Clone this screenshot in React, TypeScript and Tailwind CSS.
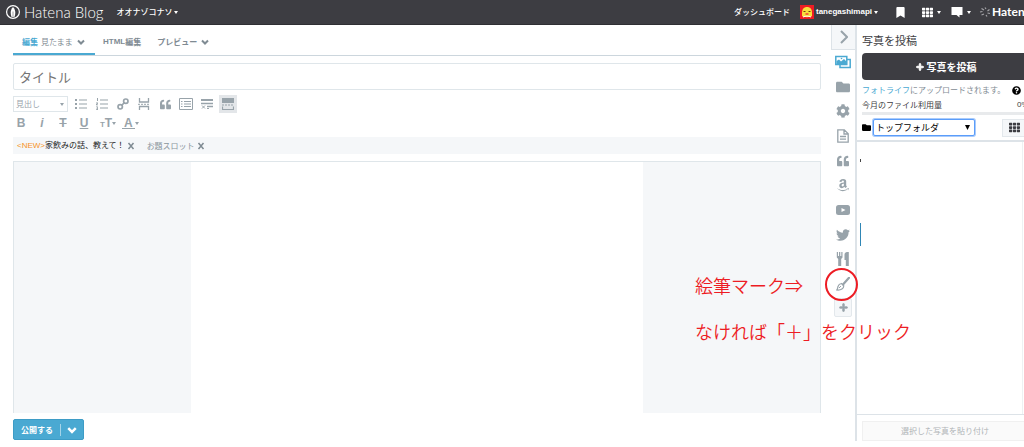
import type { ReactNode } from "react";
import {
  FaAmazon,
  FaBookmark,
  FaCog,
  FaFolder,
  FaPlus,
  FaQuestionCircle,
  FaQuoteLeft,
  FaTh,
  FaTwitter,
} from "react-icons/fa";

const HatenaMark = () => (
  <svg viewBox="0 0 16 16" className="size-4" fill="none">
    <circle cx="8" cy="8" r="6.4" stroke="#fff" strokeWidth="1.2" />
    <path d="M8 3c1.600 1.800 2.300 3.500 2.300 5.700 0 1.500-.3 3-.9 4.300H6.600c-.6-1.300-.9-2.800-.9-4.300C5.700 6.500 6.400 4.800 8 3z" fill="#fff" />
    <path d="M8 7.500V13" stroke="#3d3d42" strokeWidth=".5" />
  </svg>
);

const Avatar = () => (
  <svg viewBox="0 0 14 14" className="size-[14px]">
    <rect width="14" height="14" fill="#ee1c24" />
    <path d="M2 8c0-4 2-6 5-6 3.200 0 5 2 5 6v3c-2 1.500-8 1.500-10 0z" fill="#f7e03c" />
    <path d="M3.500 6.500h2M8.500 6.500h2" stroke="#6b3a12" strokeWidth="1" />
    <path d="M5.500 9h3" stroke="#e33" strokeWidth="1.400" />
    <path d="M3 12c2-1 6-1 8 0" stroke="#fff" strokeWidth="1.200" fill="none" />
  </svg>
);

const BubbleIcon = () => (
  <svg viewBox="0 0 12 12" className="size-3" fill="#fff">
    <path d="M.5 1h11v8H8.500v2.500L5.500 9h-5z" />
  </svg>
);

const SparkIcon = () => (
  <svg viewBox="0 0 12 12" className="size-3 shrink-0" fill="none" stroke="#a5a5a9" strokeWidth="1.200">
    <path d="M1 6l2.500-.5M2.500 2.500L5 4M6 1.500l1 1.500M10.500 3.500L8.500 5M11 7.500L8.500 7M8 10.500L7 9M2.500 9L5 8" />
  </svg>
);

const BulletListIcon = () => (
  <svg viewBox="0 0 12 12" className="size-3" fill="currentColor">
    <path d="M0 1h2v2H0zM0 5h2v2H0zM0 9h2v2H0zM4 1.500h8v1H4zM4 5.500h8v1H4zM4 9.500h8v1H4z" />
  </svg>
);

const NumberListIcon = () => (
  <svg viewBox="0 0 12 12" className="size-3" fill="currentColor">
    <path d="M1 0h1v3H1zM0 4.500h2v1L1 6.500h1v.7H0v-1l1-1H0zM0 8.500h2V12H0v-.7h1.200v-.7H.3v-.7h.9v-.7H0zM4 1.500h8v1H4zM4 5.500h8v1H4zM4 9.500h8v1H4z" />
  </svg>
);

const LinkIcon = () => (
  <svg viewBox="0 0 12 12" className="size-3" fill="none" stroke="currentColor" strokeWidth="1.700">
    <circle cx="8.800" cy="3.200" r="2.200" />
    <circle cx="3.200" cy="8.800" r="2.200" />
    <path d="M4.500 7.500l3-3" />
  </svg>
);

const BreakIcon = () => (
  <svg viewBox="0 0 12 12" className="size-3" fill="none" stroke="currentColor">
    <path d="M1.500 0v4h9V0M1.500 12V8.500h9V12" strokeWidth="1.300" />
    <path d="M0 6.300h12" strokeDasharray="2 1" />
  </svg>
);

const TocIcon = () => (
  <svg viewBox="0 0 14 12" className="h-3 w-[14px]" fill="none" stroke="currentColor">
    <path d="M.5.5h13v11H.5zM2 3.500h1.500M5 3.500h7M2 6h1.500M5 6h7M2 8.500h1.500M5 8.500h7" />
  </svg>
);

const FootnoteIcon = () => (
  <svg viewBox="0 0 12 12" className="size-3" fill="none" stroke="currentColor">
    <path d="M0 2h12" strokeWidth="2" />
    <path d="M0 5.500h12M6 8.500h6" strokeWidth="1.300" />
    <path d="M1 7.500l3 3M4 7.500l-3 3M6 10.500h2" />
  </svg>
);

const MoreIcon = () => (
  <svg viewBox="0 0 12 12" className="size-3" fill="none" stroke="currentColor">
    <path d="M0 0h12v5H0z" fill="currentColor" stroke="none" />
    <path d="M0 7h12" strokeDasharray="2 1" />
    <path d="M.5 8.500v3h11v-3" strokeWidth="1.200" />
  </svg>
);

const PhotosIcon = () => (
  <svg viewBox="0 0 16 14" className="h-[14px] w-4">
    <path d="M5 4.500h10.200v8H5z" fill="#fff" stroke="#4aa9d2" strokeWidth="1.500" />
    <path d="M.8 1.500h11v8H.8z" fill="#fff" stroke="#4aa9d2" strokeWidth="1.500" />
    <path d="M1.500 9V6l2.500-1.500L6 6.500 9 4l2.500 2.500V9z" fill="#4aa9d2" />
    <circle cx="6.500" cy="3.500" r=".8" fill="#4aa9d2" />
  </svg>
);

const PageIcon = () => (
  <svg viewBox="0 0 12 14" className="h-[14px] w-3" fill="none" stroke="currentColor" strokeWidth="1.300">
    <path d="M.8.8h6.500l3.900 3.900v8.500H.8zM7 1v4h4" />
    <path d="M3 7.500h6M3 10.200h6" />
  </svg>
);

const VideoIcon = () => (
  <svg viewBox="0 0 14 10" className="h-[10px] w-[14px]">
    <rect width="14" height="10" rx="2.500" fill="currentColor" />
    <path d="M5.500 3l4 2-4 2z" fill="#fff" />
  </svg>
);

const FoodIcon = () => (
  <svg viewBox="0 0 14 14" className="size-[14px]" fill="currentColor">
    <path d="M.8 0H2v4h1V0h1.300v4h1V0h1.200v5.500L5.200 7v7H2.200V7L.8 5.500zM8.500 2.500C8.500 1 9.800 0 11 0h1.800v14H9.800V8H8.500z" />
  </svg>
);

const BrushIcon = () => (
  <svg viewBox="0 0 14 14" className="size-[14px]" fill="none" stroke="currentColor">
    <path d="M13 .8L7 7.500" strokeWidth="2.200" strokeLinecap="round" />
    <path d="M5.500 6.500l2.200 2C8 11.500 5 13.500.8 13c1-1 .7-2 1.200-3.500.6-1.800 2-2.800 3.500-3z" strokeWidth="1.200" />
    <path d="M3 11l2-2" />
  </svg>
);

const Caret = ({ className = "" }: { className?: string }) => (
  <svg viewBox="0 0 4 3" className={`w-1 ${className}`} fill="currentColor">
    <path d="M0 0h4L2 3z" />
  </svg>
);

const ChevronDown = ({ className = "" }: { className?: string }) => (
  <svg viewBox="0 0 8 8" className={className} fill="none" stroke="currentColor" strokeWidth="2">
    <path d="M1 2.500l3 3 3-3" />
  </svg>
);

const CloseIcon = () => (
  <svg viewBox="0 0 8 8" className="size-2" fill="none" stroke="currentColor" strokeWidth="1.500">
    <path d="M1.500 1l5 6M6.500 1l-5 6" />
  </svg>
);

const tools: { label: string; icon: ReactNode; active?: boolean }[] = [
  { label: "箇条書き", icon: <BulletListIcon /> },
  { label: "番号付きリスト", icon: <NumberListIcon /> },
  { label: "リンク", icon: <LinkIcon /> },
  { label: "続きを読む", icon: <BreakIcon /> },
  { label: "引用", icon: <FaQuoteLeft className="size-[11px]" /> },
  { label: "目次", icon: <TocIcon /> },
  { label: "脚注", icon: <FootnoteIcon /> },
  { label: "ツールバー", icon: <MoreIcon />, active: true },
];

const railItems: { label: string; icon: ReactNode }[] = [
  { label: "写真", icon: <PhotosIcon /> },
  { label: "カテゴリー", icon: <FaFolder className="size-[14px]" /> },
  { label: "設定", icon: <FaCog className="size-[14px]" /> },
  { label: "下書き", icon: <PageIcon /> },
  { label: "引用", icon: <FaQuoteLeft className="size-3" /> },
  { label: "Amazon", icon: <FaAmazon className="size-[14px]" /> },
  { label: "YouTube", icon: <VideoIcon /> },
  { label: "Twitter", icon: <FaTwitter className="size-[14px]" /> },
  { label: "グルメ", icon: <FoodIcon /> },
  { label: "お絵かき", icon: <BrushIcon /> },
];

function Header() {
  return (
    <header className="flex h-[25px] items-center overflow-hidden whitespace-nowrap border-b border-[#2f2f33] bg-[#3d3d42] text-[8px] text-white">
      <a href="#" className="ml-[5px] flex items-center gap-[3px] font-['Lato'] text-[15px] font-light leading-none">
        <HatenaMark />
        Hatena Blog
      </a>
      <button className="ml-[13px] flex items-center gap-0.5 font-medium">
        オオナゾコナソ
        <Caret />
      </button>
      <nav className="ml-auto flex items-center">
        <a href="#" className="mr-2.5 font-medium">ダッシュボード</a>
        <button className="mr-[17px] flex items-center gap-0.5 font-['Liberation_Sans'] text-[8px] font-bold">
          <Avatar />
          tanegashimapi
          <Caret />
        </button>
        <button aria-label="ブックマーク" className="mr-4"><FaBookmark className="size-[11px]" /></button>
        <button aria-label="サービス" className="mr-2.5 flex items-center gap-1">
          <FaTh className="size-[11px]" />
          <Caret />
        </button>
        <button aria-label="お知らせ" className="mr-2 flex items-center gap-1">
          <BubbleIcon />
          <Caret />
        </button>
        <a href="#" className="flex w-[45px] items-center gap-px font-['Lato'] text-[12px] font-bold">
          <SparkIcon />
          Haten
        </a>
      </nav>
    </header>
  );
}

function Toolbar() {
  return (
    <div className="mt-1.5 text-[#98a3aa]">
      <div className="flex items-center">
        <div className="relative mr-[5px]">
          <select
            aria-label="見出し"
            className="block h-4 w-[55px] appearance-none border border-[#dfe6ea] bg-white px-0.5 text-[8px] leading-none"
          >
            <option>見出し</option>
          </select>
          <Caret className="absolute right-1 top-[7px]" />
        </div>
        <div className="flex gap-[5px]">
          {tools.map((tool) => (
            <button
              key={tool.label}
              aria-label={tool.label}
              className={`flex h-4 w-4 items-center justify-center ${tool.active ? "bg-[#e3e6e9] ring-1 ring-[#e3e6e9]" : ""}`}
            >
              {tool.icon}
            </button>
          ))}
        </div>
      </div>
      <div className="mt-[3px] flex h-4 items-center gap-[5px] font-['Liberation_Sans'] text-[12px] font-bold">
        <button className="w-4">B</button>
        <button className="w-4 italic">i</button>
        <button className="w-4 line-through">T</button>
        <button className="w-4 underline">U</button>
        <button className="ml-0.5 flex w-[18px] items-baseline justify-center">
          <span className="text-[8px]">T</span>T
          <Caret className="self-center" />
        </button>
        <button className="flex w-[18px] items-center">
          <span className="border-b border-current px-[2px] leading-[10px]">A</span>
          <Caret />
        </button>
      </div>
    </div>
  );
}

function Editor() {
  return (
    <main className="flex min-w-0 flex-1 flex-col pl-[13px] pr-[10px] text-[8px]">
      <div className="flex h-[31px] items-end border-b border-[#ccd6dd] text-[#7f8b93]">
        <button className="flex h-6 w-[82px] items-center gap-[3px] border-b-2 border-[#4aa9d2] pl-[9px]">
          <span className="font-bold text-[#4aa9d2]">編集</span>
          見たまま
          <ChevronDown className="ml-px size-2" />
        </button>
        <button className="ml-2 flex h-6 items-center border-b-2 border-transparent font-bold">
          <span className="font-['Liberation_Sans'] font-bold">HTML</span>編集
        </button>
        <button className="ml-4 flex h-6 items-center gap-1 border-b-2 border-transparent font-bold">
          プレビュー
          <ChevronDown className="size-2" />
        </button>
      </div>
      <input
        aria-label="タイトル"
        placeholder="タイトル"
        className="mt-[7px] h-[27px] shrink-0 rounded-xs border border-[#dfe6ea] bg-white px-[5px] text-[13px] placeholder:text-[#757575]"
      />
      <Toolbar />
      <div className="mt-1.5 flex h-[17px] items-center bg-[#f5f7f9] px-1">
        <a href="#" className="text-[#222]">
          <span className="font-['Liberation_Sans'] text-[#f7931e]">&lt;NEW&gt;</span>家飲みの話、教えて！
        </a>
        <button aria-label="閉じる" className="ml-0.5 text-[#7f8b93]"><CloseIcon /></button>
        <a href="#" className="ml-3 text-[#8a959c]">お題スロット</a>
        <button aria-label="閉じる" className="ml-0.5 text-[#7f8b93]"><CloseIcon /></button>
      </div>
      <div className="mt-[7px] flex h-[252px] justify-center border-x border-t border-[#dfe6ea] bg-[#f5f7f9]">
        <div
          role="textbox"
          aria-label="本文"
          contentEditable
          suppressContentEditableWarning
          className="w-[56%] bg-white outline-none"
        />
      </div>
      <div className="mt-1.5 flex h-[21px] w-[71px] items-center rounded-xs border border-[#3d9cc6] bg-[#4aa9d2] font-bold text-white">
        <button className="flex-1">公開する</button>
        <button aria-label="公開オプション" className="flex h-3 w-[23px] items-center justify-center border-l border-[#a4d4e8]">
          <ChevronDown className="size-[10px]" />
        </button>
      </div>
    </main>
  );
}

function Rail() {
  return (
    <nav className="flex w-[26px] flex-col items-center border-r-2 border-[#dde3e8] text-[#98a3aa]">
      <button aria-label="サイドバーを閉じる" className="flex h-[25px] w-full items-center justify-center border-b border-l border-[#dde3e8] bg-[#f5f7f9]">
        <svg viewBox="0 0 8 14" className="h-[14px] w-2" fill="none" stroke="currentColor" strokeWidth="2">
          <path d="M1 1l6 6-6 6" />
        </svg>
      </button>
      <div className="mt-1 flex h-[238px] flex-col justify-between">
        {railItems.map((item) => (
          <button key={item.label} aria-label={item.label} className="flex h-4 w-4 items-center justify-center">
            {item.icon}
          </button>
        ))}
      </div>
      <button aria-label="追加" className="mt-1.5 flex h-[19px] w-[18px] items-center justify-center rounded-xs border border-[#e3e8ec] bg-[#f5f7f9]">
        <FaPlus className="size-[9px]" stroke="currentColor" strokeWidth="40" />
      </button>
    </nav>
  );
}

function PhotoPanel() {
  return (
    <aside className="flex w-[167px] flex-col overflow-hidden whitespace-nowrap text-[8px] text-[#3d3d42]">
      <h2 className="ml-[5px] mt-1.5 text-[11px] leading-[18px]">写真を投稿</h2>
      <button className="ml-[5px] mt-1 flex h-[27px] shrink-0 items-center justify-center gap-[3px] rounded-l-sm bg-[#3d3d42] pl-1.5 text-[10px] font-bold text-white">
        <FaPlus className="size-2" stroke="currentColor" strokeWidth="60" />
        写真を投稿
      </button>
      <p className="ml-[5px] mt-1 flex items-center leading-[12px] text-[#7f8b93]">
        <a href="#" className="text-[#4aa9d2]">フォトライフ</a>にアップロードされます。
        <FaQuestionCircle className="ml-[7px] size-[9px] text-black" />
      </p>
      <div className="ml-[5px] mt-0.5 flex leading-[14px]">
        今月のファイル利用量
        <span className="ml-auto w-[7px] font-['Liberation_Sans']">0%</span>
      </div>
      <div className="ml-[5px] h-[3px] shrink-0 bg-[#e8eaec]" />
      <div className="flex h-[27px] shrink-0 items-center border-b-2 border-[#dde3e8] pl-[5px] text-black">
        <FaFolder className="mr-0.5 size-[9px]" />
        <div className="relative">
          <select
            aria-label="フォルダ"
            className="block h-[17px] w-[102px] appearance-none rounded-xs border border-[#5b9dfa] bg-white px-[2px] text-[9px] leading-none ring-1 ring-[#a9cbfb]"
          >
            <option>トップフォルダ</option>
          </select>
          <svg viewBox="0 0 5 5" className="absolute right-[5px] top-[6px] w-[5px]">
            <path d="M0 0h5L2.500 5z" />
          </svg>
        </div>
        <button aria-label="表示切り替え" className="ml-auto flex h-[18px] w-[22px] items-center gap-1 overflow-hidden border-y border-l border-[#e3e8ec] bg-[#f5f7f9] pl-1.5 text-[#3d3d42]">
          <FaTh className="size-[11px] shrink-0" />
          <Caret className="shrink-0" />
        </button>
      </div>
      <div className="flex h-[273px] shrink-0 justify-between border-b border-[#dde3e8] pl-[3px]">
        <div className="flex flex-col">
          <span className="mt-[17px] h-[3px] w-px bg-[#444]" />
          <span className="mt-[61px] h-[23px] w-px bg-[#2f86b5]" />
        </div>
        <span className="mr-px w-px bg-[#eef1f3]" />
      </div>
      <button disabled className="ml-[5px] mt-1.5 h-[20px] shrink-0 border border-r-0 border-[#f0f0f0] bg-[#fafafa] pl-[3px] text-[#b0b4b7]">
        選択した写真を貼り付け
      </button>
    </aside>
  );
}

export default function App() {
  return (
    <div className="relative min-h-screen overflow-hidden bg-white font-['Noto_Sans_CJK_JP',sans-serif] leading-none">
      <Header />
      <div className="flex">
        <Editor />
        <Rail />
        <PhotoPanel />
      </div>

      {/* 手書きの説明 */}
      <div className="pointer-events-none absolute right-[113px] top-[276px] w-[216px] whitespace-nowrap text-[18px] font-[350] leading-[18px] text-[#ed1c24]">
        <p>絵筆マーク⇒</p>
        <p className="mt-7">なければ「＋」をクリック</p>
      </div>
      <div className="pointer-events-none absolute right-[166px] top-[268px] size-[33px] rounded-full border-2 border-[#ed1c24]" />
    </div>
  );
}
